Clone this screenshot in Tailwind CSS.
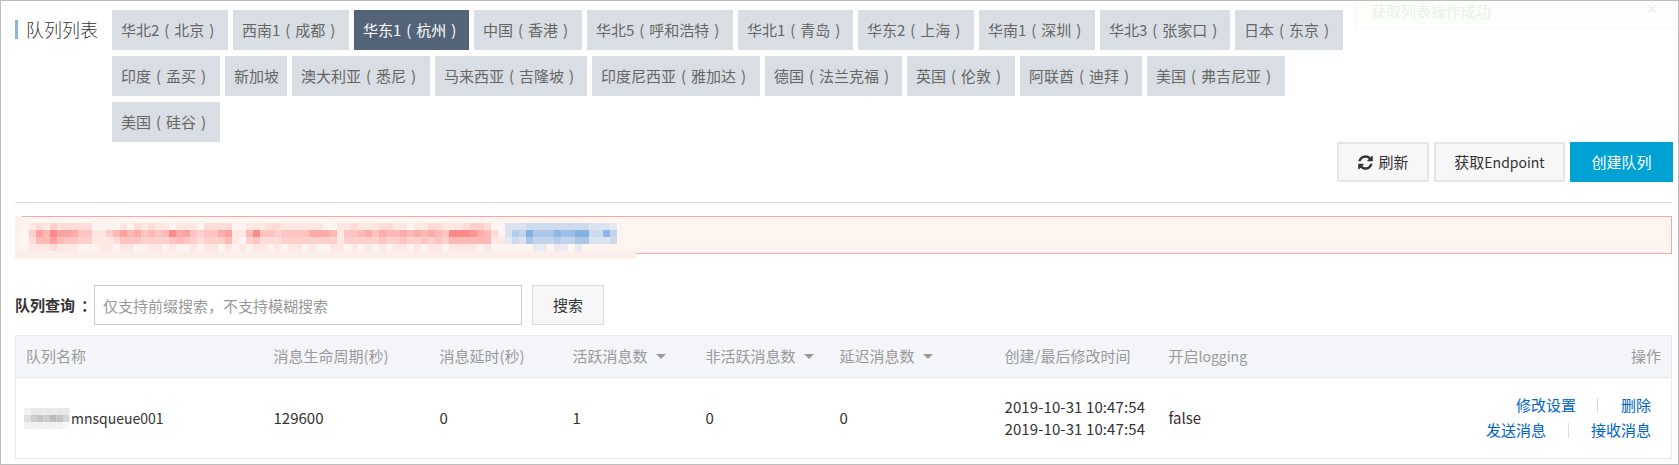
<!DOCTYPE html>
<html lang="zh-CN">
<head>
  <meta charset="UTF-8" />
  <title>队列列表</title>
  <script src="https://cdn.jsdelivr.net/npm/@tailwindcss/browser@4"></script>
</head>
<body class="bg-white overflow-hidden font-['Noto_Sans_CJK_SC','Noto_Sans',sans-serif] text-[15px] text-[#333]">
<div class="relative w-[1679px] h-[465px] border border-[#bdbdbd] pl-[14px] pr-[5px] pt-[9px]">

  <!-- fading toast -->
  <div class="absolute left-[1354px] top-0 w-[323px] h-[28px] bg-[#fcfefb] border-b border-l border-[#f6f8f6] pl-[15px] text-[15px] leading-[20px] text-[#e6f4e4]">
    获取列表操作成功
    <span class="absolute left-[290px] top-0 text-[14px] leading-[14px] text-[#efefec]">✕</span>
  </div>

  <!-- title + regions -->
  <div class="flex">
    <div class="w-[97px] shrink-0 pt-[10px]">
      <h1 class="border-l-[3px] border-[#88b7e0] pl-[8px] text-[18px] leading-[19px] font-light text-[#333] whitespace-nowrap">队列列表</h1>
    </div>
    <div class="w-[1240px] flex flex-wrap gap-x-[5px] gap-y-[6px] text-[#666] [word-spacing:1.6px] whitespace-nowrap leading-[40px]">
      <a class="w-[116px] h-[40px] pl-[9px] bg-[#d9dee4]">华北2 ( 北京 )</a>
      <a class="w-[116px] h-[40px] pl-[9px] bg-[#d9dee4]">西南1 ( 成都 )</a>
      <a class="w-[115px] h-[40px] pl-[9px] bg-[#546478] text-white">华东1 ( 杭州 )</a>
      <a class="w-[108px] h-[40px] pl-[9px] bg-[#d9dee4]">中国 ( 香港 )</a>
      <a class="w-[146px] h-[40px] pl-[9px] bg-[#d9dee4]">华北5 ( 呼和浩特 )</a>
      <a class="w-[115px] h-[40px] pl-[9px] bg-[#d9dee4]">华北1 ( 青岛 )</a>
      <a class="w-[116px] h-[40px] pl-[9px] bg-[#d9dee4]">华东2 ( 上海 )</a>
      <a class="w-[116px] h-[40px] pl-[9px] bg-[#d9dee4]">华南1 ( 深圳 )</a>
      <a class="w-[130px] h-[40px] pl-[9px] bg-[#d9dee4]">华北3 ( 张家口 )</a>
      <a class="w-[108px] h-[40px] pl-[9px] bg-[#d9dee4]">日本 ( 东京 )</a>
      <a class="w-[108px] h-[40px] pl-[9px] bg-[#d9dee4]">印度 ( 孟买 )</a>
      <a class="w-[62px] h-[40px] pl-[9px] bg-[#d9dee4]">新加坡</a>
      <a class="w-[138px] h-[40px] pl-[9px] bg-[#d9dee4]">澳大利亚 ( 悉尼 )</a>
      <a class="w-[152px] h-[40px] pl-[9px] bg-[#d9dee4]">马来西亚 ( 吉隆坡 )</a>
      <a class="w-[168px] h-[40px] pl-[9px] bg-[#d9dee4]">印度尼西亚 ( 雅加达 )</a>
      <a class="w-[137px] h-[40px] pl-[9px] bg-[#d9dee4]">德国 ( 法兰克福 )</a>
      <a class="w-[108px] h-[40px] pl-[9px] bg-[#d9dee4]">英国 ( 伦敦 )</a>
      <a class="w-[122px] h-[40px] pl-[9px] bg-[#d9dee4]">阿联酋 ( 迪拜 )</a>
      <a class="w-[138px] h-[40px] pl-[9px] bg-[#d9dee4]">美国 ( 弗吉尼亚 )</a>
      <a class="w-[108px] h-[40px] pl-[9px] bg-[#d9dee4]">美国 ( 硅谷 )</a>
    </div>
  </div>

  <!-- actions -->
  <div class="flex justify-end gap-[5px] mt-0">
    <button class="w-[92px] h-[40px] border-2 border-[#e6e6e6] bg-[#f7f7f7] flex items-center justify-center gap-[4px] text-[#333]">
      <svg class="w-[17px] h-[17px]" viewBox="0 0 1792 1792" fill="#333"><path d="M1639 1056q0 5-1 7-64 268-268 434.5t-478 166.5q-146 0-282.5-55t-243.5-157l-129 129q-19 19-45 19t-45-19-19-45v-448q0-26 19-45t45-19h448q26 0 45 19t19 45-19 45l-137 137q71 66 161 102t187 36q134 0 250-65t186-179q11-17 53-117 8-23 30-23h192q13 0 22.5 9.5t9.5 22.5zm25-800v448q0 26-19 45t-45 19h-448q-26 0-45-19t-19-45 19-45l138-138q-148-137-349-137-134 0-250 65t-186 179q-11 17-53 117-8 23-30 23h-199q-13 0-22.5-9.5t-9.5-22.5v-7q65-268 270-434.5t480-166.5q146 0 284 55.5t245 156.5l130-129q19-19 45-19t45 19 19 45z"/></svg>
      刷新
    </button>
    <button class="w-[131px] h-[40px] border-2 border-[#e6e6e6] bg-[#f7f7f7] text-[#333]">获取<span class="text-[14px]">Endpoint</span></button>
    <button class="w-[103px] h-[40px] bg-[#00a2d4] text-white">创建队列</button>
  </div>

  <hr class="mt-[20px] mr-[1px] border-t border-[#dcdcdc]" />

  <!-- alert, the mosaic covers the blurred-out notice -->
  <div class="relative mt-[13px] mr-[1px] h-[38px] bg-[#fff5f0] border border-[#f4a9a9]">
    <svg id="notice" class="absolute left-[-1px] top-[-1px]" width="623" height="43"></svg>
  </div>

  <!-- search -->
  <div class="flex items-center mt-[31px] h-[40px]">
    <label class="w-[79px] shrink-0 font-bold whitespace-nowrap">队列查询<span class="ml-[6px]">：</span></label>
    <input class="w-[428px] h-[40px] border border-[#ccc] px-[8px] placeholder:text-[#999] outline-none" placeholder="仅支持前缀搜索，不支持模糊搜索" />
    <button class="ml-[10px] w-[72px] h-[40px] border border-[#ddd] bg-[#f7f7f7]">搜索</button>
  </div>

  <!-- table -->
  <table class="mt-[10px] w-[1657px] table-fixed border border-[#e3e8ee] border-collapse">
    <thead>
      <tr class="h-[42px] bg-[#f3f5f9] border-b border-[#e3e8ee] text-[#999] text-left">
        <th class="w-[248px] pl-[10px] font-normal">队列名称</th>
        <th class="w-[166px] pl-[10px] font-normal">消息生命周期(秒)</th>
        <th class="w-[133px] pl-[10px] font-normal">消息延时(秒)</th>
        <th class="w-[133px] pl-[10px] font-normal">
          <span class="flex items-center gap-[8px]">活跃消息数<i class="w-0 h-0 border-x-[5px] border-t-[5px] border-x-transparent border-t-[#999]"></i></span>
        </th>
        <th class="w-[134px] pl-[10px] font-normal">
          <span class="flex items-center gap-[8px]">非活跃消息数<i class="w-0 h-0 border-x-[5px] border-t-[5px] border-x-transparent border-t-[#999]"></i></span>
        </th>
        <th class="w-[165px] pl-[10px] font-normal">
          <span class="flex items-center gap-[8px]">延迟消息数<i class="w-0 h-0 border-x-[5px] border-t-[5px] border-x-transparent border-t-[#999]"></i></span>
        </th>
        <th class="w-[164px] pl-[10px] font-normal">创建/最后修改时间</th>
        <th class="w-[200px] pl-[10px] font-normal">开启<span class="text-[14px]">logging</span></th>
        <th class="pr-[10px] font-normal text-right">操作</th>
      </tr>
    </thead>
    <tbody>
      <tr class="h-[81px]">
        <td class="pl-[8px]">
          <span class="flex items-center gap-[1px]">
            <svg id="owner" width="46" height="21"></svg>
            <span class="text-[14px]">mnsqueue001</span>
          </span>
        </td>
        <td class="pl-[10px]">129600</td>
        <td class="pl-[10px]">0</td>
        <td class="pl-[10px]">1</td>
        <td class="pl-[10px]">0</td>
        <td class="pl-[10px]">0</td>
        <td class="pl-[10px] leading-[22px] tracking-[0.1px]">2019-10-31 10:47:54<br />2019-10-31 10:47:54</td>
        <td class="pl-[10px]">false</td>
        <td></td>
      </tr>
    </tbody>
  </table>

  <div class="absolute right-[27px] top-[394px] flex flex-col items-end gap-[5px] text-[#0064c8] leading-[20px] whitespace-nowrap">
    <div class="flex items-center">
      <a>修改设置</a><i class="w-px h-[15px] bg-[#ddd] ml-[21px] mr-[23px]"></i><a>删除</a>
    </div>
    <div class="flex items-center">
      <a>发送消息</a><i class="w-px h-[15px] bg-[#ddd] mx-[22px]"></i><a>接收消息</a>
    </div>
  </div>
</div>

<script>
  // mosaic over the hidden text: one digit per 7px cell, 0 = background, 9 = strongest
  const pink = [
    "0012132222" + "2000010212" + "1101110222" + "2001112211" + "1111001121" + "1122110112" + "2111233200",
    "0037597764" + "4113575645" + "4596743446" + "7115944344" + "4466651445" + "6465565656" + "5499986520",
    "0025575443" + "3111244433" + "3345432333" + "5103422233" + "3333331333" + "3343343343" + "4355555511",
    "0011121110" + "0011011001" + "1010010110" + "1010110101" + "1010011010" + "1010110101" + "1011110100"
  ];
  const blue = [
    "2223333333332221",
    "2549666877993384",
    "1326444544662223",
    "0000110110100000"
  ];
  const rowTop = [7, 14, 21, 28];
  const mix = (a, b, t) => a.map((v, i) => Math.round(v + (b[i] - v) * t));
  const rgb = c => "rgb(" + c.join(",") + ")";
  let cells = '<rect x="0" y="0" width="7" height="35" fill="#fdf1ec"/><rect x="0" y="35" width="621" height="8" fill="#fceeeb"/>';
  rowTop.forEach((y, r) => {
    [...pink[r]].forEach((d, i) => {
      if (d === "0") return;
      cells += `<rect x="${i * 7}" y="${y}" width="7" height="7" fill="${rgb(mix([255, 243, 238], [251, 138, 136], d / 9))}"/>`;
    });
    [...blue[r]].forEach((d, i) => {
      if (d === "0") return;
      cells += `<rect x="${(70 + i) * 7}" y="${y}" width="7" height="7" fill="${rgb(mix([243, 241, 243], [132, 176, 226], d / 9))}"/>`;
    });
  });
  document.getElementById("notice").innerHTML = cells;

  const gray = [
    "1222222",
    "3565764",
    "1111110"
  ];
  let owner = "";
  gray.forEach((row, r) => {
    [...row].forEach((d, i) => {
      const v = 250 - d * 9;
      owner += `<rect x="${i * 6.5}" y="${r * 7}" width="6.5" height="7" fill="rgb(${v},${v},${v})"/>`;
    });
  });
  document.getElementById("owner").innerHTML = owner;
</script>
</body>
</html>
